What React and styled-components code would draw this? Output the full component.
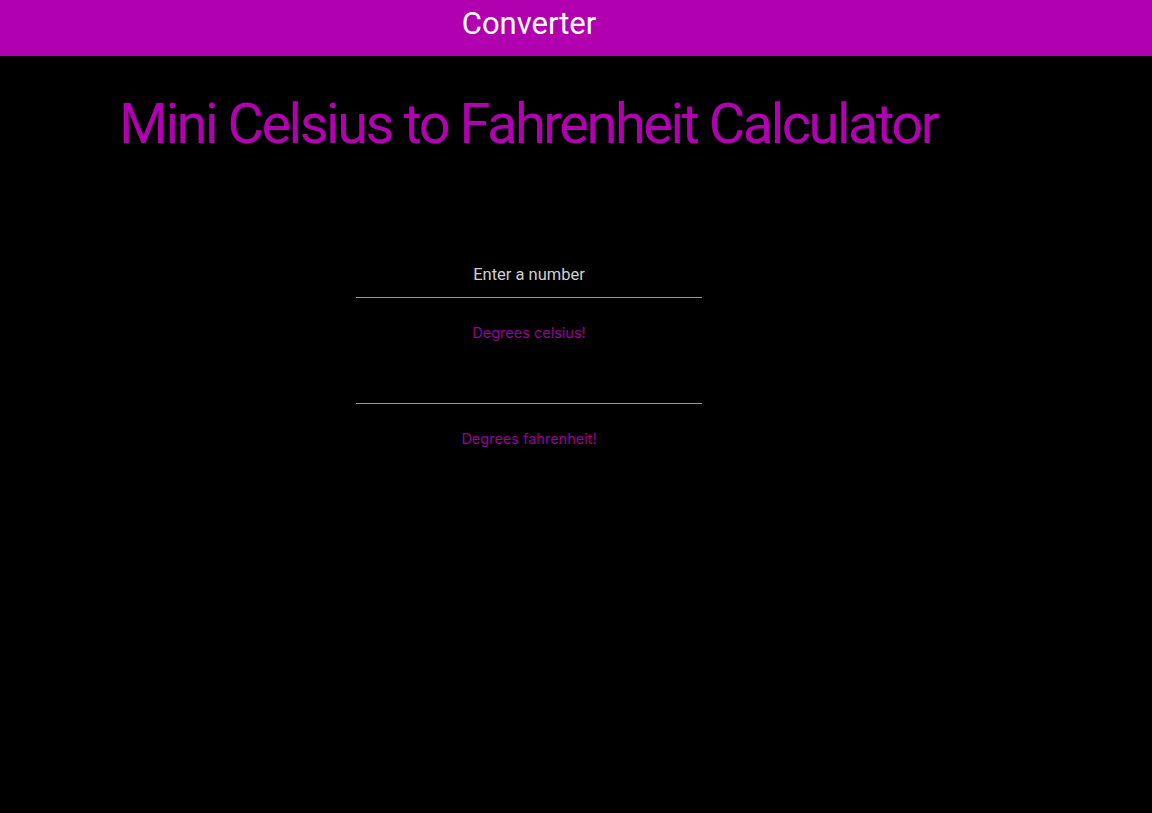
import React, { useState } from "react";
import styled, { createGlobalStyle } from "styled-components";

const GlobalStyle = createGlobalStyle`
  html, body {
    margin: 0;
    padding: 0;
    background: #000;
    font-family: Roboto, "Liberation Sans", sans-serif;
  }
`;

const App = () => {
  const [celsius, setCelsius] = useState("");
  const fahrenheit = celsius === "" || isNaN(Number(celsius)) ? "" : String(Number(celsius) * 1.8 + 32);

  return (
    <>
      <GlobalStyle />
      <StHeader>
        <StBrand>Converter</StBrand>
      </StHeader>
      <StMain>
        <StTitle>Mini Celsius to Fahrenheit Calculator</StTitle>
        <StForm>
          <StField>
            <StInput
              type="text"
              placeholder="Enter a number"
              value={celsius}
              onChange={(e) => setCelsius(e.target.value)}
            />
            <StLabel>Degrees celsius!</StLabel>
          </StField>
          <StField>
            <StInput type="text" value={fahrenheit} readOnly />
            <StLabel>Degrees fahrenheit!</StLabel>
          </StField>
        </StForm>
      </StMain>
    </>
  );
};

export default App;

const StHeader = styled.header`
  height: 56px;
  background: #b000b0;
  width: 100%;
`;

const StBrand = styled.div`
  width: 1058px;
  text-align: center;
  color: #fff;
  font-size: 31px;
  line-height: 48px;
`;

const StMain = styled.main`
  width: 1058px;
  display: flex;
  flex-direction: column;
`;

const StTitle = styled.h1`
  margin: 34px 0 0 119px;
  color: #b000b0;
  font-size: 56px;
  font-weight: 400;
  line-height: 68px;
  letter-spacing: -2.5px;
  white-space: nowrap;
`;

const StForm = styled.div`
  margin-top: 98px;
  display: flex;
  flex-direction: column;
  align-items: center;
  gap: 21px;
`;

const StField = styled.div`
  width: 346px;
  display: flex;
  flex-direction: column;
  align-items: center;
`;

const StInput = styled.input`
  width: 100%;
  box-sizing: border-box;
  height: 42px;
  padding: 0 0 4px;
  background: transparent;
  border: none;
  border-bottom: 1px solid #9a9a9a;
  color: #ddd;
  font-family: Roboto, "Liberation Sans", sans-serif;
  font-size: 16.5px;
  text-align: center;
  outline: none;
  &::placeholder {
    color: #d0d0d0;
  }
`;

const StLabel = styled.div`
  margin-top: 26px;
  color: #980098;
  font-family: Inter, Roboto, sans-serif;
  font-size: 14.5px;
  line-height: 17px;
`;
